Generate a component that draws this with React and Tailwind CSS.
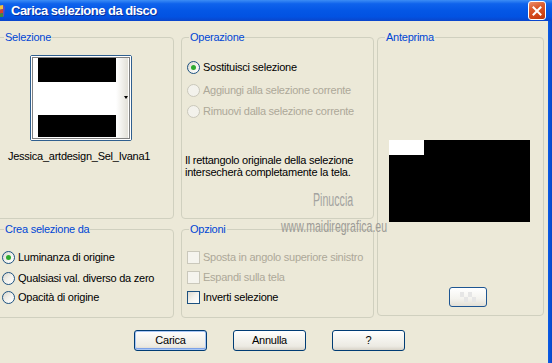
import React from "react";
import clsx from "clsx";

// Windows XP style "Carica selezione da disco" dialog

const Radio = ({ checked, disabled }) => (
  <span
    className={clsx(
      "w-[13px] h-[13px] rounded-full border flex items-center justify-center shrink-0",
      disabled
        ? "border-[#CAC8BB] bg-[#F3F2EC]"
        : "border-[#1C5180] bg-[linear-gradient(135deg,#D9D6CC_0%,#F2F1EC_50%,#FFFFFF_100%)]"
    )}
  >
    {checked && <span className="w-[5px] h-[5px] rounded-full bg-[#2EAA2E]" />}
  </span>
);

const Check = ({ disabled }) => (
  <span
    className={clsx(
      "w-[13px] h-[13px] border shrink-0",
      disabled
        ? "border-[#CAC8BB] bg-[#F5F4EE]"
        : "border-[#1C5180] bg-[linear-gradient(135deg,#DCD9CF_0%,#F4F3EE_50%,#FFFFFF_100%)]"
    )}
  />
);

const Option = ({ control, label, disabled, className }) => (
  <div className={clsx("flex items-center gap-[3px] h-[13px]", className)}>
    {control}
    <span className={clsx("leading-[13px] whitespace-nowrap", disabled ? "text-[#ACA899]" : "text-black")}>
      {label}
    </span>
  </div>
);

const Group = ({ title, className, children }) => (
  <fieldset className={clsx("border border-[#D0D0BF] rounded-[4px] shrink-0", className)}>
    <legend className="ml-[7px] px-[1px] leading-[13px] text-[#0046D5]">{title}</legend>
    {children}
  </fieldset>
);

const XpButton = ({ children, primary }) => (
  <button
    className={clsx(
      "w-[73px] h-[21px] rounded-[3px] border border-[#003C74] text-black leading-none bg-[linear-gradient(180deg,#FFFFFF_0%,#F5F4EF_40%,#ECEAE3_80%,#D8D3C8_100%)]",
      primary && "shadow-[inset_0_0_0_1px_#A9C6F4,inset_0_-1px_0_1px_#7DA2E8]"
    )}
  >
    {children}
  </button>
);

export default function App() {
  return (
    <div className="w-[552px] h-[363px] overflow-hidden flex flex-col bg-[#ECE9D8] font-['Liberation_Sans',Arial,sans-serif] text-[11px] tracking-[-0.25px]">
      {/* title bar */}
      <div className="h-[21px] shrink-0 flex items-center bg-[linear-gradient(180deg,#3C8DF5_0%,#0F63EC_18%,#0457E6_50%,#0252E2_80%,#0A45CB_100%)]">
        <svg width="8" height="14" viewBox="0 0 8 14" className="shrink-0 ml-[-2px]">
          <path d="M0 2 L5 1 L6 5 L1 6 Z" fill="#F3C23A" />
          <path d="M1 6 L6 5 L6 9 L1 10 Z" fill="#D8432B" />
          <path d="M1 10 L6 9 L5 13 L2 13 Z" fill="#3F8E3A" />
          <path d="M5 1 L7 3 L6 12 L5 13" fill="#6A4BB8" />
        </svg>
        <span className="ml-[5px] text-white font-bold text-[13px] tracking-[-0.5px] [text-shadow:1px_1px_0_#0A2F9A]">
          Carica selezione da disco
        </span>
        <div className="ml-auto mr-[6px] w-[18px] h-[19px] rounded-[3px] border border-white flex items-center justify-center bg-[linear-gradient(160deg,#EB8F6E_0%,#DB5B2E_35%,#CF4315_75%,#B8350F_100%)]">
          <svg width="10" height="10" viewBox="0 0 10 10">
            <path d="M1.5 1.5 L8.5 8.5 M8.5 1.5 L1.5 8.5" stroke="white" strokeWidth="2" strokeLinecap="square" />
          </svg>
        </div>
      </div>

      <div className="flex flex-1">
        {/* body */}
        <div className="relative w-[548px] flex flex-col">
          <div className="flex pt-[10px] ml-[-4px]">
            {/* column 1 */}
            <div className="flex flex-col gap-[4px]">
              <Group title="Selezione" className="w-[178px] h-[188px]">
                <div className="ml-[33px] mt-[11px] w-[102px] h-[86px] rounded-[2px] border border-[#2F5F8F] bg-white">
                  <svg width="100" height="84" viewBox="0 0 100 84" className="block">
                    <defs>
                      <linearGradient id="strip" x1="0" x2="1" y1="0" y2="0">
                        <stop offset="0" stopColor="#FFFFFF" />
                        <stop offset="1" stopColor="#E2E0D8" />
                      </linearGradient>
                    </defs>
                    <rect x="0" y="0" width="100" height="84" fill="white" />
                    <rect x="85" y="2" width="12" height="80" fill="url(#strip)" />
                    <rect x="7" y="2" width="78" height="24" fill="black" />
                    <rect x="7" y="59" width="78" height="22" fill="black" />
                    <path d="M93 40 L97 40 L95 43 Z" fill="black" />
                    <rect x="1.5" y="1.5" width="97" height="81" fill="none" stroke="black" strokeWidth="1" strokeDasharray="1 1" />
                  </svg>
                </div>
                <div className="ml-[11px] mt-[9px] leading-[13px] text-black">Jessica_artdesign_Sel_Ivana1</div>
              </Group>

              <Group title="Crea selezione da" className="w-[178px] h-[95px]">
                <Option className="ml-[5px] mt-[15px]" control={<Radio checked />} label="Luminanza di origine" />
                <Option className="ml-[5px] mt-[8px]" control={<Radio />} label="Qualsiasi val. diverso da zero" />
                <Option className="ml-[5px] mt-[6px]" control={<Radio />} label="Opacità di origine" />
              </Group>
            </div>

            {/* column 2 */}
            <div className="flex flex-col gap-[4px] ml-[7px]">
              <Group title="Operazione" className="w-[193px] h-[188px]">
                <Option className="ml-[5px] mt-[17px]" control={<Radio checked />} label="Sostituisci selezione" />
                <Option className="ml-[5px] mt-[10px]" control={<Radio disabled />} label="Aggiungi alla selezione corrente" disabled />
                <Option className="ml-[5px] mt-[8px]" control={<Radio disabled />} label="Rimuovi dalla selezione corrente" disabled />
                <p className="ml-[3px] mt-[36px] leading-[12px] text-black">
                  Il rettangolo originale della selezione
                  <br />
                  intersecherà completamente la tela.
                </p>
              </Group>

              <Group title="Opzioni" className="w-[193px] h-[95px]">
                <Option className="ml-[5px] mt-[15px]" control={<Check disabled />} label="Sposta in angolo superiore sinistro" disabled />
                <Option className="ml-[5px] mt-[7px]" control={<Check disabled />} label="Espandi sulla tela" disabled />
                <Option className="ml-[5px] mt-[7px]" control={<Check />} label="Inverti selezione" />
              </Group>
            </div>

            {/* column 3 */}
            <Group title="Anteprima" className="ml-[3px] w-[167px] h-[285px]">
              <div className="ml-[11px] mt-[96px] w-[141px] h-[82px] bg-black">
                <div className="w-[35px] h-[15px] bg-white" />
              </div>
              <div className="ml-[71px] mt-[65px] w-[38px] h-[20px] rounded-[3px] border border-[#1D5592] flex items-center justify-center bg-[linear-gradient(180deg,#FFFFFF_0%,#F4F3EE_60%,#E3E0D6_100%)]">
                <svg width="16" height="10" viewBox="0 0 16 10">
                  <rect x="0" y="0" width="4" height="5" fill="#E6E6E6" />
                  <rect x="8" y="0" width="4" height="5" fill="#E6E6E6" />
                  <rect x="4" y="5" width="4" height="5" fill="#E6E6E6" />
                  <rect x="12" y="5" width="4" height="5" fill="#E6E6E6" />
                </svg>
              </div>
            </Group>
          </div>

          {/* buttons */}
          <div className="flex gap-[26px] ml-[134px] mt-[12px]">
            <XpButton primary>Carica</XpButton>
            <XpButton>Annulla</XpButton>
            <XpButton>?</XpButton>
          </div>

          {/* watermark */}
          <span className="absolute left-[313px] top-[169px] origin-left scale-x-[0.59] text-[18px] leading-[20px] text-[#A3A3A0] tracking-normal whitespace-nowrap pointer-events-none">
            Pinuccia
          </span>
          <span className="absolute left-[281px] top-[197px] origin-left scale-x-[0.62] text-[17px] leading-[18px] text-[#9C9B96] tracking-normal whitespace-nowrap pointer-events-none">
            www.maidiregrafica.eu
          </span>
        </div>
        {/* right window edge */}
        <div className="w-[4px] bg-[linear-gradient(90deg,#0A5DE6,#0845C8)]" />
      </div>
    </div>
  );
}
